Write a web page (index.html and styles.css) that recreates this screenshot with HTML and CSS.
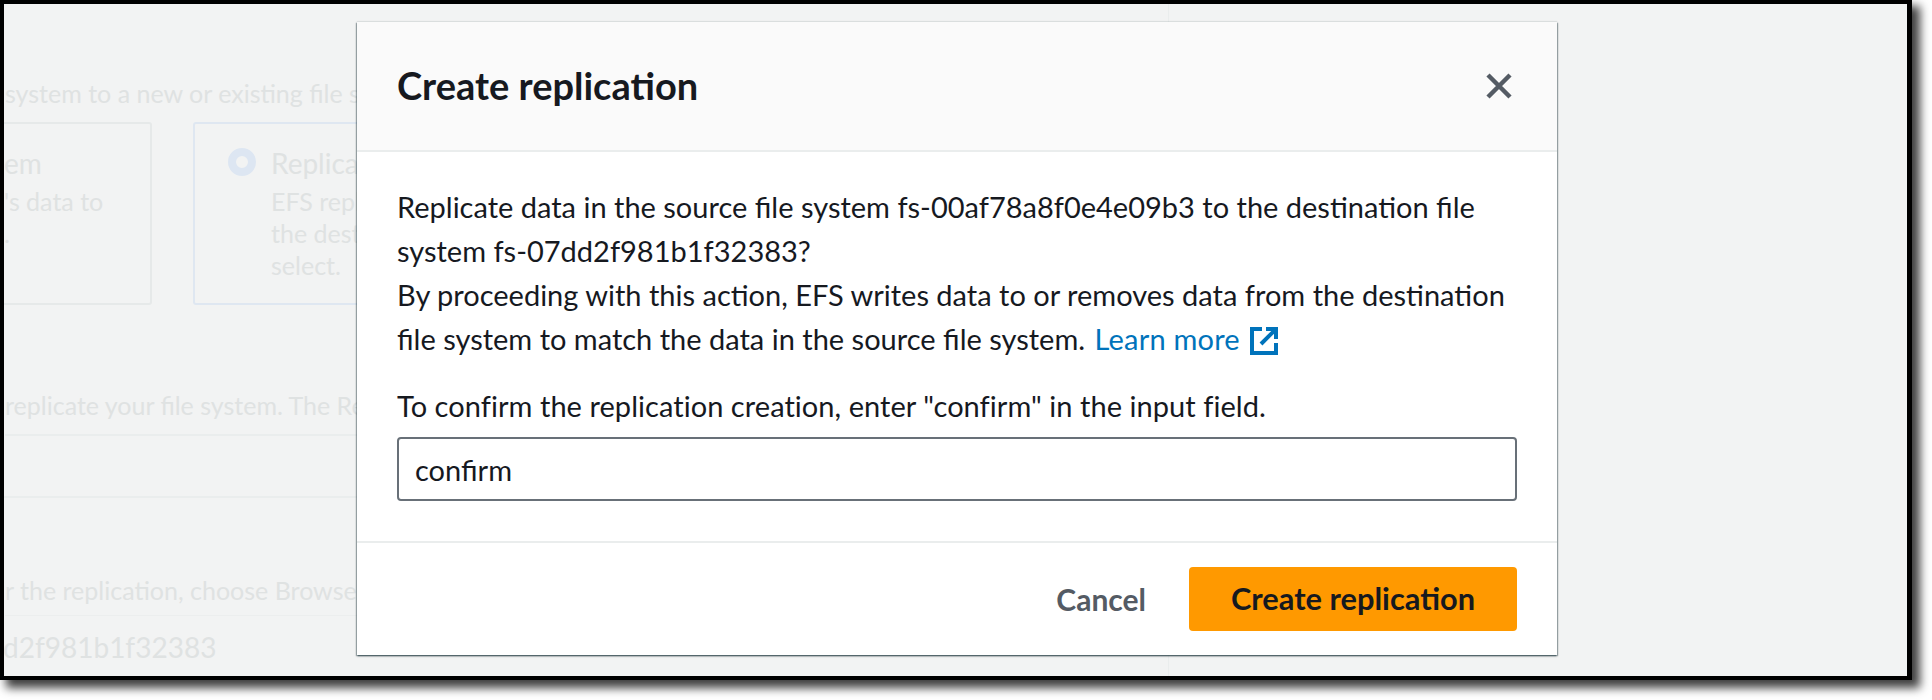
FILE: index.html
```html
<!DOCTYPE html>
<html lang="en">
<head>
<meta charset="utf-8">
<title>Create replication</title>
<link rel="stylesheet" href="styles.css">
</head>
<body>
<div class="frame">
  <div class="backdrop">
    <p class="intro">system to a new or existing file system</p>
    <div class="cards">
      <div class="card card-existing">
        <div class="card-title">em</div>
        <div class="card-line">'s data to</div>
        <div class="card-line">.</div>
      </div>
      <div class="card card-selected">
        <span class="radio"></span>
        <div class="card-copy">
          <div class="card-title">Replicate</div>
          <div class="card-line">EFS replicates</div>
          <div class="card-line">the destination</div>
          <div class="card-line">select.</div>
        </div>
      </div>
    </div>
    <p class="desc">replicate your file system. The Region</p>
    <div class="rule-row"></div>
    <p class="browse">r the replication, choose Browse</p>
    <p class="fsid">d2f981b1f32383</p>
  </div>
  <div class="seam seam-top"></div>
  <div class="seam seam-bottom"></div>

  <section class="modal">
    <header class="modal-head">
      <h2 class="modal-title">Create replication</h2>
      <svg class="close" viewBox="0 0 26 26" width="26" height="26" aria-hidden="true"><path d="M2 2l22 22M24 2L2 24"/></svg>
    </header>
    <div class="modal-body">
      <p class="msg">Replicate data in the source file system fs-00af78a8f0e4e09b3 to the destination file system fs-07dd2f981b1f32383?<br>By proceeding with this action, EFS writes data to or removes data from the destination file system to match the data in the source file system. <a class="link" href="#">Learn more<svg class="ext" viewBox="0 0 28 28" width="28" height="28" aria-hidden="true"><path d="M12 2H2v24h24V16M16 2h10v10M26 2L11 17"/></svg></a></p>
      <label class="confirm-label" for="confirm">To confirm the replication creation, enter "confirm" in the input field.</label>
      <input class="confirm-input" id="confirm" type="text" value="confirm">
    </div>
    <footer class="modal-foot">
      <button class="btn-cancel" type="button">Cancel</button>
      <button class="btn-primary" type="button">Create replication</button>
    </footer>
  </section>
</div>
</body>
</html>
```
FILE: styles.css
```css
* { box-sizing: border-box; }
html, body { margin: 0; padding: 0; background: #fff; }
body { width: 1932px; height: 700px; overflow: hidden; font-family: Lato, "Open Sans", sans-serif; color: #16191f; }

.frame {
  position: relative;
  width: 1912px;
  height: 680px;
  border: solid #000;
  border-width: 4px 5px 4px 4px;
  background: #f2f3f3;
  box-shadow: 7px 7px 9px 1px rgba(0, 0, 0, .75);
}
.backdrop { height: 100%; overflow: hidden; color: #dfe2e2; font-size: 25px; line-height: 44px; }
.backdrop p { margin: 0; white-space: nowrap; }
.backdrop .intro { margin-left: 1px; padding-top: 67px; }
.cards { display: flex; gap: 41px; margin-top: 7px; margin-left: -20px; }
.card { width: 168px; height: 183px; border: 2px solid #e6e9e9; border-radius: 3px; padding-top: 17px; flex: none; }
.card-selected { width: 700px; border-color: #dfe7f1; display: flex; gap: 15px; padding-left: 33px; }
.card-existing { padding-left: 18px; }
.card-title { font-size: 28px; line-height: 44px; }
.card-line { line-height: 32px; font-size: 25px; white-space: nowrap; }
.radio { width: 28px; height: 28px; border-radius: 50%; border: 8px solid #dde6f2; background: #f2f3f3; flex: none; margin-top: 7px; }
.backdrop .desc { margin: 78px 0 0 1px; padding-bottom: 7px; border-bottom: 2px solid #eaeded; width: 600px; }
.rule-row { height: 62px; border-bottom: 2px solid #eaeded; width: 600px; }
.backdrop .browse { margin: 70px 0 0 1px; padding-bottom: 3px; border-bottom: 1px solid #eceeee; width: 1000px; }
.backdrop .fsid { margin: 9px 0 0 -1px; font-size: 28px; }

.seam { position: absolute; left: 1164px; width: 1px; background: #eaeded; }
.seam-top { top: 0; height: 18px; }
.seam-bottom { bottom: 0; height: 21px; }

.modal {
  position: absolute;
  left: 353px;
  top: 18px;
  width: 1200px;
  height: 633px;
  background: #fff;
  display: flex;
  flex-direction: column;
  box-shadow: 0 1px 2px rgba(0, 28, 36, .55), 1px 1px 1px rgba(0, 28, 36, .25), -1px 1px 1px rgba(0, 28, 36, .25), 0 -1px 1px rgba(0, 28, 36, .06);
}
.modal-head {
  height: 130px;
  flex: none;
  display: flex;
  align-items: center;
  justify-content: space-between;
  padding: 0 45px 0 40px;
  background: #fafafa;
  border-bottom: 2px solid #eaeded;
}
.modal-title { margin: 0 0 2px; font-size: 38px; line-height: 44px; font-weight: 700; }
.close { flex: none; }
.close path { fill: none; stroke: #545b64; stroke-width: 4.5; }

.modal-body { flex: 1; padding: 33px 40px 0 40px; font-size: 29px; line-height: 44px; }
.msg { margin: 0; width: 1120px; }
.link { color: #0073bb; text-decoration: none; margin-left: 2px; letter-spacing: .2px; }
.ext { margin-left: 10px; vertical-align: -5px; }
.ext path { fill: none; stroke: #0073bb; stroke-width: 4; }
.confirm-label { display: block; margin-top: 23px; letter-spacing: .05px; }
.confirm-input {
  display: block;
  width: 100%;
  height: 64px;
  margin-top: 9px;
  padding: 0 16px;
  border: 2px solid #687078;
  border-radius: 4px;
  background: #fff;
  color: #16191f;
  font: inherit;
}
.modal-foot {
  height: 114px;
  flex: none;
  display: flex;
  align-items: center;
  justify-content: flex-end;
  gap: 43px;
  padding: 0 40px;
  border-top: 2px solid #eaeded;
}
.btn-cancel, .btn-primary { border: 0; font-family: Lato, "Open Sans", sans-serif; font-weight: 700; line-height: 44px; }
.btn-cancel { background: none; color: #545b64; padding: 0; font-size: 30px; }
.btn-primary { width: 328px; height: 64px; border-radius: 4px; background: #f90; color: #16191f; font-size: 30.8px; }
```
